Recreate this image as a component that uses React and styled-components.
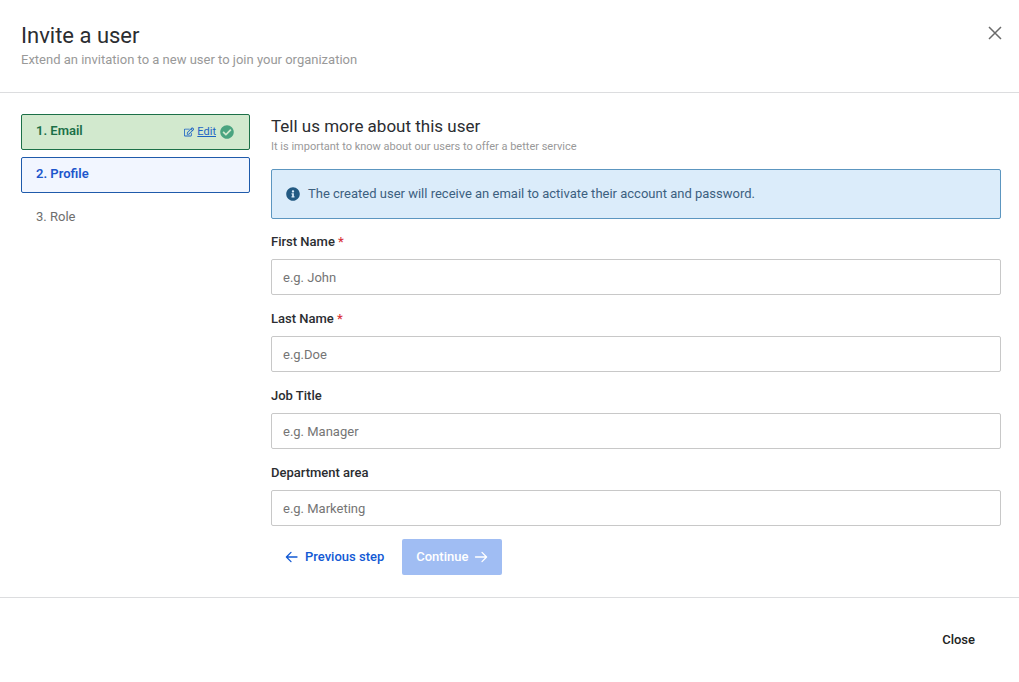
import React, { useState } from 'react';
import styled, { createGlobalStyle } from 'styled-components';
import { FaCheckCircle, FaInfoCircle, FaRegEdit } from 'react-icons/fa';

const GlobalStyle = createGlobalStyle`
  *, *::before, *::after {
    box-sizing: border-box;
  }

  body {
    margin: 0;
    background: #fff;
    color: #2b2d31;
    font-family: Roboto, 'Liberation Sans', sans-serif;
    font-size: 13px;
    line-height: 20px;
  }

  button, input {
    font: inherit;
  }
`;

// Form fields of the profile step
const fields = [
  { id: 'firstName', label: 'First Name', placeholder: 'e.g. John', required: true },
  { id: 'lastName', label: 'Last Name', placeholder: 'e.g.Doe', required: true },
  { id: 'jobTitle', label: 'Job Title', placeholder: 'e.g. Manager' },
  { id: 'department', label: 'Department area', placeholder: 'e.g. Marketing' },
];

// Styled Components
const Dialog = styled.div`
  display: flex;
  flex-direction: column;
  min-height: 100vh;
`;

const Header = styled.header`
  display: flex;
  justify-content: space-between;
  align-items: flex-start;
  padding: 22px 16px 22px 21px;
  border-bottom: 1px solid #dcdddf;
`;

const Title = styled.h1`
  margin: 0;
  font-size: 22px;
  line-height: 28px;
  font-weight: 400;
`;

const Subtitle = styled.p`
  margin: 0;
  color: #999;
`;

const IconButton = styled.button`
  display: flex;
  padding: 3px 0;
  border: none;
  background: none;
  color: #6b6b6b;
  cursor: pointer;
`;

const Body = styled.main`
  display: grid;
  grid-template-columns: 229px 1fr;
  gap: 21px;
  padding: 21px 18px 22px 21px;
`;

const Steps = styled.ol`
  display: flex;
  flex-direction: column;
  gap: 7px;
  margin: 0;
  padding: 0;
  list-style: none;
`;

const stepColors = {
  done: { border: '#1c7048', background: '#d2e9ce', text: '#1c7048' },
  active: { border: '#1f5bab', background: '#f2f6ff', text: '#1d56cc' },
  pending: { border: 'transparent', background: 'transparent', text: '#6e6e6e' },
};

const Step = styled.li`
  display: flex;
  align-items: center;
  justify-content: space-between;
  height: 36px;
  padding: 0 15px 2px 14px;
  border: 1px solid ${props => stepColors[props.$status].border};
  border-radius: 2px;
  background: ${props => stepColors[props.$status].background};
  color: ${props => stepColors[props.$status].text};
  font-weight: ${props => (props.$status === 'pending' ? 400 : 600)};
`;

const StepActions = styled.span`
  display: flex;
  align-items: center;
  gap: 4px;
  padding-top: 2px;
  color: #4aa480;
`;

const EditLink = styled.a`
  display: flex;
  align-items: center;
  gap: 3px;
  color: #1d63c4;
  font-size: 11px;
  font-weight: 400;
  line-height: 16px;
`;

const Content = styled.form`
  min-width: 0;
`;

const SectionTitle = styled.h2`
  margin: 0;
  font-size: 17px;
  line-height: 24px;
  font-weight: 400;
`;

const SectionHint = styled.p`
  margin: 0;
  color: #999;
  font-size: 11px;
  line-height: 18px;
`;

const Alert = styled.div`
  display: flex;
  align-items: center;
  gap: 8px;
  min-height: 50px;
  margin: 13px 0;
  padding: 0 14px;
  border: 1px solid #5c96c0;
  border-radius: 2px;
  background: #dbecfa;
  color: #3b6080;

  svg {
    flex: none;
    color: #235a82;
  }
`;

const Fields = styled.div`
  display: flex;
  flex-direction: column;
  gap: 14px;
`;

const Field = styled.div`
  display: flex;
  flex-direction: column;
  gap: 7px;
`;

const Label = styled.label`
  font-weight: 500;
`;

const Required = styled.span`
  color: #d9363e;
`;

const Input = styled.input`
  width: 100%;
  height: 36px;
  padding: 0 11px;
  border: 1px solid #c8c8c8;
  border-radius: 2px;
  background: #fff;
  color: #2b2d31;

  &::placeholder {
    color: #757575;
    opacity: 1;
  }
`;

const Actions = styled.div`
  display: flex;
  gap: 4px;
  margin-top: 13px;
`;

const Button = styled.button`
  display: flex;
  align-items: center;
  gap: 6px;
  height: 36px;
  padding: 0 14px;
  border: none;
  border-radius: 2px;
  background: ${props => (props.$primary ? '#a0bdf3' : 'transparent')};
  color: ${props => (props.$primary ? '#fff' : '#1259d4')};
  font-weight: 500;
  cursor: pointer;

  &:disabled {
    cursor: not-allowed;
  }
`;

const Footer = styled.footer`
  display: flex;
  justify-content: flex-end;
  padding: 24px 30px;
  border-top: 1px solid #dcdddf;
`;

const CloseButton = styled(Button)`
  color: #222;
`;

const Arrow = ({ right }) => (
  <svg
    width="14"
    height="14"
    viewBox="0 0 14 14"
    fill="none"
    stroke="currentColor"
    strokeWidth="1.3"
    strokeLinecap="round"
    strokeLinejoin="round"
    aria-hidden="true"
  >
    {right ? <path d="M1.5 7H12.5M8 2.4L12.6 7L8 11.6" /> : <path d="M12 7H1.5M6 2.4L1.4 7L6 11.6" />}
  </svg>
);

const InviteUser = () => {
  const [values, setValues] = useState({});

  const handleChange = (event) => {
    setValues({ ...values, [event.target.id]: event.target.value });
  };

  const canContinue = fields.every(field => !field.required || values[field.id]);

  return (
    <Dialog>
      <GlobalStyle />
      <Header>
        <div>
          <Title>Invite a user</Title>
          <Subtitle>Extend an invitation to a new user to join your organization</Subtitle>
        </div>
        <IconButton type="button" aria-label="Close dialog">
          <svg width="16" height="16" viewBox="0 0 16 16" fill="none" stroke="currentColor" strokeWidth="1.5">
            <path d="M2 2L14 14M14 2L2 14" />
          </svg>
        </IconButton>
      </Header>

      <Body>
        <Steps>
          <Step $status="done">
            1. Email
            <StepActions>
              <EditLink href="#email">
                <FaRegEdit size={10} />
                Edit
              </EditLink>
              <FaCheckCircle size={14} />
            </StepActions>
          </Step>
          <Step $status="active" aria-current="step">2. Profile</Step>
          <Step $status="pending">3. Role</Step>
        </Steps>

        <Content onSubmit={event => event.preventDefault()}>
          <SectionTitle>Tell us more about this user</SectionTitle>
          <SectionHint>It is important to know about our users to offer a better service</SectionHint>

          <Alert>
            <FaInfoCircle size={14} />
            The created user will receive an email to activate their account and password.
          </Alert>

          <Fields>
            {fields.map(field => (
              <Field key={field.id}>
                <Label htmlFor={field.id}>
                  {field.label} {field.required && <Required>*</Required>}
                </Label>
                <Input
                  id={field.id}
                  type="text"
                  placeholder={field.placeholder}
                  value={values[field.id] || ''}
                  onChange={handleChange}
                />
              </Field>
            ))}
          </Fields>

          <Actions>
            <Button type="button">
              <Arrow />
              Previous step
            </Button>
            <Button type="submit" $primary disabled={!canContinue}>
              Continue
              <Arrow right />
            </Button>
          </Actions>
        </Content>
      </Body>

      <Footer>
        <CloseButton type="button">Close</CloseButton>
      </Footer>
    </Dialog>
  );
};

export default InviteUser;
